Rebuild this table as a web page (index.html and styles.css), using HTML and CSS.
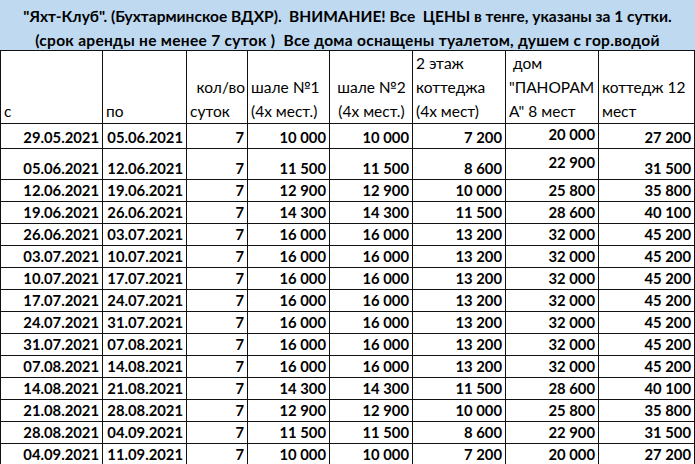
FILE: index.html
```html
<!DOCTYPE html>
<html lang="ru">
<head>
<meta charset="utf-8">
<link rel="stylesheet" href="styles.css">
</head>
<body>
<div class="sheet">
  <div class="banner">
    <div class="banner-line">"Яхт-Клуб". (Бухтарминское ВДХР).&nbsp; ВНИМАНИЕ! Все&nbsp; ЦЕНЫ в тенге, указаны за 1 сутки.</div>
    <div class="banner-line wide">(срок аренды не менее 7 суток )&nbsp; Все дома оснащены туалетом, душем с гор.водой</div>
  </div>
  <table class="prices">
    <colgroup>
      <col class="c1"><col class="c2"><col class="c3"><col class="c4"><col class="c5"><col class="c6"><col class="c7"><col class="c8">
    </colgroup>
    <thead>
      <tr class="head">
        <th class="h-left">с</th>
        <th class="h-left">по</th>
        <th class="h-split"><div class="r">кол/во</div><div>суток</div></th>
        <th class="h-left">шале №1<br>(4х мест.)</th>
        <th class="h-center">шале №2<br>(4х мест.)</th>
        <th class="h-left">2 этаж<br>коттеджа<br>(4х мест)</th>
        <th class="h-left">&nbsp;дом<br>"ПАНОРАМ<br>А" 8 мест</th>
        <th class="h-left">коттедж 12<br>мест</th>
      </tr>
    </thead>
    <tbody>
      <tr class="r1"><td>29.05.2021</td><td>05.06.2021</td><td>7</td><td>10 000</td><td>10 000</td><td>7 200</td><td class="mid">20 000</td><td>27 200</td></tr>
      <tr class="r2"><td>05.06.2021</td><td>12.06.2021</td><td>7</td><td>11 500</td><td>11 500</td><td>8 600</td><td class="mid">22 900</td><td>31 500</td></tr>
      <tr><td>12.06.2021</td><td>19.06.2021</td><td>7</td><td>12 900</td><td>12 900</td><td>10 000</td><td>25 800</td><td>35 800</td></tr>
      <tr><td>19.06.2021</td><td>26.06.2021</td><td>7</td><td>14 300</td><td>14 300</td><td>11 500</td><td>28 600</td><td>40 100</td></tr>
      <tr><td>26.06.2021</td><td>03.07.2021</td><td>7</td><td>16 000</td><td>16 000</td><td>13 200</td><td>32 000</td><td>45 200</td></tr>
      <tr><td>03.07.2021</td><td>10.07.2021</td><td>7</td><td>16 000</td><td>16 000</td><td>13 200</td><td>32 000</td><td>45 200</td></tr>
      <tr><td>10.07.2021</td><td>17.07.2021</td><td>7</td><td>16 000</td><td>16 000</td><td>13 200</td><td>32 000</td><td>45 200</td></tr>
      <tr><td>17.07.2021</td><td>24.07.2021</td><td>7</td><td>16 000</td><td>16 000</td><td>13 200</td><td>32 000</td><td>45 200</td></tr>
      <tr><td>24.07.2021</td><td>31.07.2021</td><td>7</td><td>16 000</td><td>16 000</td><td>13 200</td><td>32 000</td><td>45 200</td></tr>
      <tr><td>31.07.2021</td><td>07.08.2021</td><td>7</td><td>16 000</td><td>16 000</td><td>13 200</td><td>32 000</td><td>45 200</td></tr>
      <tr><td>07.08.2021</td><td>14.08.2021</td><td>7</td><td>16 000</td><td>16 000</td><td>13 200</td><td>32 000</td><td>45 200</td></tr>
      <tr><td>14.08.2021</td><td>21.08.2021</td><td>7</td><td>14 300</td><td>14 300</td><td>11 500</td><td>28 600</td><td>40 100</td></tr>
      <tr><td>21.08.2021</td><td>28.08.2021</td><td>7</td><td>12 900</td><td>12 900</td><td>10 000</td><td>25 800</td><td>35 800</td></tr>
      <tr><td>28.08.2021</td><td>04.09.2021</td><td>7</td><td>11 500</td><td>11 500</td><td>8 600</td><td>22 900</td><td>31 500</td></tr>
      <tr><td>04.09.2021</td><td>11.09.2021</td><td>7</td><td>10 000</td><td>10 000</td><td>7 200</td><td>20 000</td><td>27 200</td></tr>
    </tbody>
  </table>
</div>
</body>
</html>
```

FILE: styles.css
```css
html, body {
  margin: 0;
  padding: 0;
  background: #ffffff;
}
body {
  font-family: Lato, "Noto Sans", "Liberation Sans", sans-serif;
  color: #000;
  overflow: hidden;
}
.sheet {
  width: 695px;
}
.banner {
  height: 50px;
  background: #bed9f0;
  display: flex;
  flex-direction: column;
  align-items: center;
  justify-content: flex-start;
  padding-top: 4px;
  box-sizing: border-box;
  font-weight: 700;
  font-size: 15.5px;
  line-height: 24px;
  white-space: nowrap;
}
.banner-line {
  text-align: center;
}
.banner-line.wide {
  letter-spacing: 0.3px;
}
.prices {
  border-collapse: collapse;
  table-layout: fixed;
  width: 694px;
}
.c1 { width: 102px; }
.c2 { width: 84px; }
.c3 { width: 61px; }
.c4 { width: 82px; }
.c5 { width: 83px; }
.c6 { width: 93px; }
.c7 { width: 93px; }
.c8 { width: 96px; }
.prices th, .prices td {
  border: 1px solid #111;
  overflow: hidden;
  white-space: nowrap;
}
.prices th {
  font-weight: 400;
  font-size: 15.5px;
  line-height: 24px;
  vertical-align: bottom;
  padding: 0 2px 0 3px;
}
.h-left { text-align: left; }
.h-center { text-align: center; }
.h-split { text-align: left; }
.h-split .r { text-align: right; }
.prices td {
  font-weight: 700;
  font-size: 14.8px;
  line-height: 21px;
  text-align: right;
  vertical-align: bottom;
  padding: 0 3px;
}
.prices tr.r1 td { padding-top: 3px; }
.prices tr.r2 td { padding-top: 9px; }
.prices tr.r1 td.mid { vertical-align: top; padding-top: 0; }
.prices tr.r2 td.mid { vertical-align: top; padding-top: 3px; }
```
